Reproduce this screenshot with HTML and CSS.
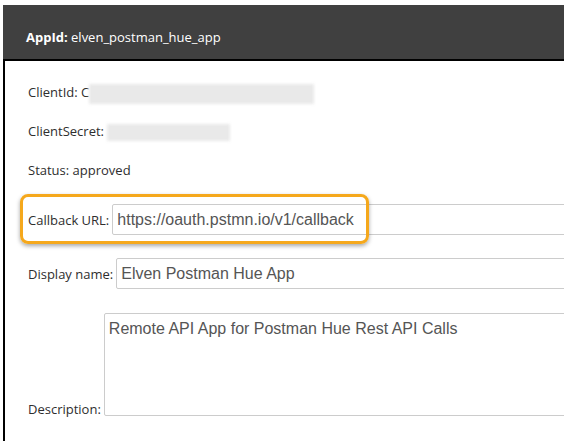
FILE: index.html
```html
<!DOCTYPE html>
<html lang="en">

<head>
    <meta charset="UTF-8">
    <meta name="viewport" content="width=device-width, initial-scale=1.0">
    <title>App details</title>
    <link rel="stylesheet" href="styles.css">
</head>

<body>

    <div class="app">
        <div class="app-header">
            <b>AppId:</b> elven_postman_hue_app
        </div>

        <div class="app-body">
            <p class="info">ClientId: C<span class="hidden hidden-id"></span></p>
            <p class="info">ClientSecret: <span class="hidden hidden-secret"></span></p>
            <p class="info">Status: approved</p>

            <div class="field field-first">
                <label for="callback">Callback URL:</label>
                <input type="text" class="input" id="callback" value="https://oauth.pstmn.io/v1/callback">
                <div class="marker"></div>
            </div>

            <div class="field">
                <label for="name">Display name:</label>
                <input type="text" class="input" id="name" value="Elven Postman Hue App">
            </div>

            <div class="field field-bottom">
                <label for="desc">Description:</label>
                <textarea class="input textarea" id="desc">Remote API App for Postman Hue Rest API Calls</textarea>
            </div>
        </div>
    </div>

</body>

</html>
```

FILE: styles.css
```css
body {
    margin: 0;
    background-color: white;
    overflow: hidden;
    font-family: "Open Sans", "Noto Sans", sans-serif;
}

.app {
    padding: 5px 0 0 3px;
}

.app-header {
    height: 54px;
    box-sizing: border-box;
    padding: 0 0 0 23px;
    background-color: #404040;
    color: white;
    font-size: 13px;
    line-height: 64px;
    white-space: nowrap;
}

.app-body {
    position: relative;
    border-top: 2px solid black;
    border-left: 2px solid black;
    padding: 21px 0 40px 23px;
    color: #2e2e2e;
    font-size: 13px;
}

.info {
    margin: 0 0 19px;
    height: 20px;
    line-height: 20px;
    white-space: nowrap;
}

.hidden {
    display: inline-block;
    vertical-align: middle;
    height: 20px;
    background-color: #e9e9e9;
    filter: blur(1.5px);
}

.hidden-id {
    width: 225px;
}

.hidden-secret {
    width: 123px;
    height: 17px;
}

.field {
    position: relative;
    display: flex;
    align-items: center;
    gap: 3px;
    margin: 23px 0 0;
    white-space: nowrap;
}

.field-first {
    margin-top: 24px;
}

.field-bottom {
    align-items: flex-end;
    margin-top: 24px;
}

.field-bottom label {
    line-height: 13px;
}

.input {
    flex: none;
    width: 500px;
    height: 31px;
    box-sizing: border-box;
    padding: 0 4px;
    border: 1px solid #ccc;
    border-radius: 2px;
    font-family: "Liberation Sans", Arial, sans-serif;
    font-size: 16px;
    color: #555;
}

.textarea {
    height: 103px;
    padding-top: 6px;
    resize: none;
}

.marker {
    position: absolute;
    left: -8px;
    top: -10px;
    width: 343px;
    height: 44px;
    border: 3px solid #f5a81c;
    border-radius: 8px;
    box-shadow: 0 2px 4px rgba(0, 0, 0, 0.35);
}
```
